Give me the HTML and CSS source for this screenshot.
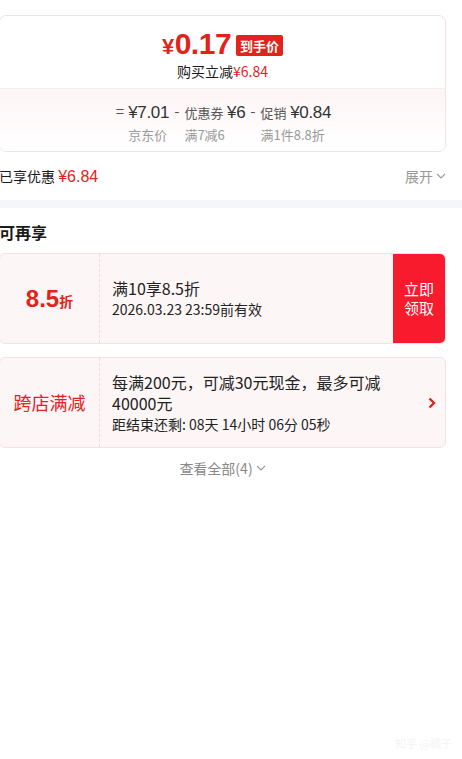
FILE: index.html
```html
<!DOCTYPE html>
<html lang="zh-CN">
<head>
    <meta charset="UTF-8">
    <meta name="viewport" content="width=device-width, initial-scale=1.0">
    <title>优惠明细</title>
    <link rel="stylesheet" href="styles.css">
</head>
<body>
    <main class="page">
        <section class="price-card">
            <div class="price-top">
                <div class="price-line">
                    <span class="price"><span class="yen">¥</span>0.17</span>
                    <span class="tag">到手价</span>
                </div>
                <div class="save">购买立减<span class="red">¥6.84</span></div>
            </div>
            <div class="price-calc">
                <div class="calc-row">
                    <span class="op">=</span>
                    <div class="calc-col">
                        <div class="calc-top"><span class="num">¥7.01</span></div>
                        <div class="calc-sub">京东价</div>
                    </div>
                    <span class="op">-</span>
                    <div class="calc-col">
                        <div class="calc-top"><span class="lbl">优惠券</span> <span class="num">¥6</span></div>
                        <div class="calc-sub">满7减6</div>
                    </div>
                    <span class="op">-</span>
                    <div class="calc-col">
                        <div class="calc-top"><span class="lbl">促销</span> <span class="num">¥0.84</span></div>
                        <div class="calc-sub">满1件8.8折</div>
                    </div>
                </div>
            </div>
        </section>

        <div class="enjoyed">
            <div>已享优惠 <span class="red">¥6.84</span></div>
            <div class="expand">展开
                <svg width="10" height="10" viewBox="0 0 10 10"><path d="M1 3 L5 7 L9 3" fill="none" stroke="#999" stroke-width="1.1"/></svg>
            </div>
        </div>
    </main>

    <div class="band"></div>

    <main class="page">
        <h2 class="title">可再享</h2>

        <div class="coupon">
            <div class="c-left"><span class="disc">8.5</span><span class="disc-unit">折</span></div>
            <div class="c-mid">
                <div class="c-main">满10享8.5折</div>
                <div class="c-sub">2026.03.23 23:59前有效</div>
            </div>
            <button class="c-btn">立即<br>领取</button>
        </div>

        <div class="coupon">
            <div class="c-left"><span class="c-name">跨店满减</span></div>
            <div class="c-mid">
                <div class="c-main">每满200元，可减30元现金，最多可减40000元</div>
                <div class="c-sub">距结束还剩: 08天 14小时 06分 05秒</div>
            </div>
            <div class="c-arrow">
                <svg width="12" height="14" viewBox="0 0 12 14"><path d="M3.5 2.5 L8 7 L3.5 11.5" fill="none" stroke="#e2231a" stroke-width="2.4"/></svg>
            </div>
        </div>

        <div class="more">查看全部(4)
            <svg width="10" height="10" viewBox="0 0 10 10"><path d="M1 3 L5 7 L9 3" fill="none" stroke="#999" stroke-width="1.1"/></svg>
        </div>
    </main>

    <div class="mark">知乎 @橘子</div>
</body>
</html>
```

FILE: styles.css
```css
body {
    margin: 0;
    background: #fff;
    color: #1a1a1a;
    font-family: "Noto Sans CJK SC", "Noto Sans", sans-serif;
    width: 462px;
    height: 759px;
    overflow: hidden;
    position: relative;
}

.page {
    margin-left: -1px;
    width: 447px;
}

.red {
    color: #e2231a;
}

.price-card {
    margin-top: 15px;
    border: 1px solid #f4e1e4;
    border-radius: 7px;
    overflow: hidden;
}

.price-top {
    padding: 11px 0 7px;
    text-align: center;
}

.price-line {
    display: flex;
    justify-content: center;
    align-items: center;
    gap: 5px;
    height: 34px;
}

.price {
    color: #e2231a;
    font-family: "Liberation Sans", Arial, sans-serif;
    font-size: 30px;
    font-weight: bold;
    letter-spacing: -0.5px;
}

.yen {
    font-size: 22px;
    margin-right: 1px;
}

.tag {
    background: #e2231a;
    color: #fff;
    font-size: 13px;
    font-weight: bold;
    padding: 0 4px;
    border-radius: 2px;
    line-height: 21px;
    margin-top: 2px;
}

.save {
    font-size: 14px;
    line-height: 20px;
    color: #1a1a1a;
}

.price-calc {
    border-top: 1px solid #f8eced;
    background: linear-gradient(#fdf5f6, #fff);
    padding: 10px 0 6px;
}

.calc-row {
    display: flex;
    justify-content: center;
    align-items: flex-start;
    padding-left: 2px;
}

.op {
    font-size: 15px;
    color: #555;
    line-height: 24px;
    margin: 0 5px 0 5px;
}

.op:first-child {
    margin-left: 0;
    margin-right: 4px;
}

.calc-col {
    display: flex;
    flex-direction: column;
}

.calc-top {
    line-height: 24px;
    color: #333;
    white-space: nowrap;
}

.num {
    font-family: "Liberation Sans", Arial, sans-serif;
    font-size: 17px;
    letter-spacing: -0.3px;
    color: #333;
}

.lbl {
    font-size: 13px;
    color: #555;
}

.calc-sub {
    font-size: 13px;
    color: #999;
    line-height: 20px;
}

.enjoyed {
    display: flex;
    justify-content: space-between;
    align-items: center;
    height: 48px;
    font-size: 14px;
}

.enjoyed .red {
    font-family: "Liberation Sans", Arial, sans-serif;
    font-size: 16px;
}

.expand {
    color: #999;
    display: flex;
    align-items: center;
    gap: 3px;
}

.band {
    height: 8px;
    background: #f5f6fa;
}

.title {
    margin: 0;
    font-size: 16px;
    font-weight: bold;
    line-height: 22px;
    padding: 13px 0 10px;
}

.coupon {
    display: flex;
    height: 89px;
    border: 1px solid #f4e1e4;
    border-radius: 6px;
    background: #fdf6f7;
    margin-bottom: 13px;
    overflow: hidden;
}

.c-left {
    width: 99px;
    border-right: 1px dashed #efdbde;
    display: flex;
    justify-content: center;
    align-items: baseline;
    line-height: 89px;
    color: #e2231a;
}

.disc {
    font-family: "Liberation Sans", Arial, sans-serif;
    font-size: 24px;
    font-weight: bold;
}

.disc-unit {
    font-size: 14px;
    font-weight: bold;
}

.c-name {
    font-size: 18px;
}

.c-mid {
    flex: 1;
    padding: 0 12px;
    display: flex;
    flex-direction: column;
    justify-content: center;
}

.c-main {
    font-size: 16px;
    line-height: 21px;
    color: #222;
}

.c-sub {
    font-size: 14px;
    line-height: 20px;
    color: #222;
}

.c-btn {
    all: unset;
    width: 52px;
    background: #f81a2d;
    color: #fff;
    font-size: 15px;
    line-height: 19px;
    text-align: center;
    padding-bottom: 1px;
}

.c-arrow {
    width: 26px;
    display: flex;
    align-items: center;
    justify-content: center;
}

.more {
    display: flex;
    justify-content: center;
    align-items: center;
    gap: 3px;
    font-size: 14px;
    color: #888;
    margin-top: -3px;
}

.mark {
    position: absolute;
    right: 10px;
    bottom: 8px;
    font-size: 11px;
    color: #f4f4f4;
}
```
